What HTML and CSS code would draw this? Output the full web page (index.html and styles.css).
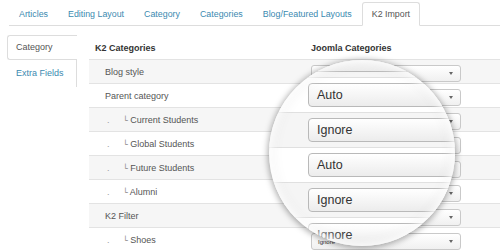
FILE: index.html
```html
<!DOCTYPE html>
<html lang="en">
<head>
    <meta charset="UTF-8">
    <meta name="viewport" content="width=device-width, initial-scale=1.0">
    <title>K2 Import</title>
    <link rel="stylesheet" href="styles.css">
</head>
<body>
    <ul class="tabs">
        <li><a href="#">Articles</a></li>
        <li><a href="#">Editing Layout</a></li>
        <li><a href="#">Category</a></li>
        <li><a href="#">Categories</a></li>
        <li><a href="#">Blog/Featured Layouts</a></li>
        <li class="active"><a href="#">K2 Import</a></li>
    </ul>

    <div class="main">
        <ul class="side">
            <li class="active"><a href="#">Category</a></li>
            <li><a href="#">Extra Fields</a></li>
        </ul>

        <div class="grid">
            <div class="row head">
                <div class="c1">K2 Categories</div>
                <div class="c2">Joomla Categories</div>
            </div>
            <div class="row">
                <div class="c1">Blog style</div>
                <div class="c2"><div class="sel"><span>A</span><i class="caret"></i></div></div>
            </div>
            <div class="row">
                <div class="c1">Parent category</div>
                <div class="c2"><div class="sel"><span></span><i class="caret"></i></div></div>
            </div>
            <div class="row">
                <div class="c1"><span class="dot">.</span><span class="gi">└</span> Current Students</div>
                <div class="c2"><div class="sel"><span></span><i class="caret"></i></div></div>
            </div>
            <div class="row">
                <div class="c1"><span class="dot">.</span><span class="gi">└</span> Global Students</div>
                <div class="c2"><div class="sel"><span></span><i class="caret"></i></div></div>
            </div>
            <div class="row">
                <div class="c1"><span class="dot">.</span><span class="gi">└</span> Future Students</div>
                <div class="c2"><div class="sel"><span></span><i class="caret"></i></div></div>
            </div>
            <div class="row">
                <div class="c1"><span class="dot">.</span><span class="gi">└</span> Alumni</div>
                <div class="c2"><div class="sel"><span></span><i class="caret"></i></div></div>
            </div>
            <div class="row">
                <div class="c1">K2 Filter</div>
                <div class="c2"><div class="sel"><span></span><i class="caret"></i></div></div>
            </div>
            <div class="row">
                <div class="c1"><span class="dot">.</span><span class="gi">└</span> Shoes</div>
                <div class="c2"><div class="sel"><span>Ignore</span><i class="caret"></i></div></div>
            </div>
        </div>
    </div>

    <!-- magnifier over the select column -->
    <div class="lens">
        <div class="lens-rows">
            <div class="lens-row"><div class="big-sel"></div></div>
            <div class="lens-row"><div class="big-sel">Auto</div></div>
            <div class="lens-row"><div class="big-sel">Ignore</div></div>
            <div class="lens-row"><div class="big-sel">Auto</div></div>
            <div class="lens-row"><div class="big-sel">Ignore</div></div>
            <div class="lens-row"><div class="big-sel">Ignore</div></div>
        </div>
    </div>
</body>
</html>
```

FILE: styles.css
```css
*{box-sizing:border-box;}
html,body{margin:0;height:250px;overflow:hidden;}
body{position:relative;background:#fff;color:#555;font-family:'Liberation Sans', Arial, sans-serif;font-size:9px;}
a{color:#3b8ab0;text-decoration:none;}

.tabs{display:flex;margin:0 0 0 9px;padding:2px 0 0;list-style:none;border-bottom:1px solid #ddd;font-size:8.85px;}
.tabs li{margin-bottom:-1px;}
.tabs a{display:block;padding:0 9px;line-height:22px;border:1px solid transparent;border-radius:3px 3px 0 0;}
.tabs .active a{border-color:#ddd #ddd #fff;background:#fff;color:#555;}

.main{display:flex;align-items:flex-start;margin-top:9px;}

.side{width:70px;margin:0 0 0 7px;padding:0;list-style:none;border-right:1px solid #ddd;}
.side a{display:block;padding:0 8px;line-height:23px;border:1px solid transparent;border-right:0;}
.side .active a{margin-right:-1px;border-color:#ddd;border-radius:3px 0 0 3px;background:#fff;color:#555;}
.side li + li a{line-height:25px;}

.grid{flex:1;margin:1px 0 0 12px;}
.row{display:flex;align-items:center;height:24px;border-bottom:1px solid #e3e3e3;}
.row:nth-child(even){background:#f6f6f6;}
.row .c1{width:222px;padding-left:16px;}
.row .c2{flex:1;align-self:flex-start;padding-top:5px;}
.head{color:#333;font-weight:bold;}
.head .c1{padding-left:6px;}
.head .c2{align-self:center;padding-top:0;}
.dot{display:inline-block;width:18px;padding-left:2px;color:#999;}
.gi{color:#888;font-family:'DejaVu Sans', sans-serif;font-size:8px;}

.sel{display:flex;align-items:center;justify-content:space-between;width:150px;height:17px;padding:0 7px 0 6px;border:1px solid #c9c9c9;border-radius:3px;background:linear-gradient(#fff, #f0f0f0);color:#333;font-size:6px;}
.caret{width:0;height:0;border-left:2.5px solid transparent;border-right:2.5px solid transparent;border-top:3px solid #666;}

.lens{position:absolute;left:269px;top:60px;width:186px;height:186px;overflow:hidden;border-radius:50%;background:#fff;box-shadow:0 1px 6px 1px rgba(0,0,0,.35);}
.lens::after{content:'';position:absolute;top:0;right:0;bottom:0;left:0;border-radius:50%;box-shadow:inset 0 0 8px 3px rgba(255,255,255,.95), inset 0 0 16px rgba(0,0,0,.08);}
.lens-rows{margin-top:-17px;}
.lens-row{height:35px;padding:5px 0 0 39px;border-bottom:1px solid #e0e0e0;}
.lens-row:nth-child(odd){background:#f5f5f5;}
.big-sel{width:220px;height:24px;padding-left:8px;border:1px solid #b9b9b9;border-radius:4px;background:linear-gradient(#fff, #ececec);color:#333;font-size:12.5px;line-height:22px;}
```
